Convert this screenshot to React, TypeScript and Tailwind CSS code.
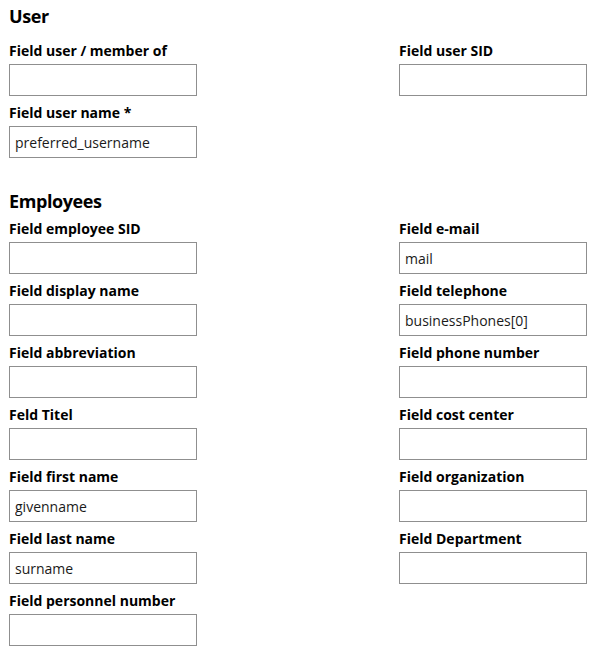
import React from "react";

type Field = { label: string; value?: string };

const userRows: [Field, Field | null][] = [
  [{ label: "Field user / member of" }, { label: "Field user SID" }],
  [{ label: "Field user name *", value: "preferred_username" }, null],
];

const employeeRows: [Field, Field | null][] = [
  [{ label: "Field employee SID" }, { label: "Field e-mail", value: "mail" }],
  [{ label: "Field display name" }, { label: "Field telephone", value: "businessPhones[0]" }],
  [{ label: "Field abbreviation" }, { label: "Field phone number" }],
  [{ label: "Feld Titel" }, { label: "Field cost center" }],
  [{ label: "Field first name", value: "givenname" }, { label: "Field organization" }],
  [{ label: "Field last name", value: "surname" }, { label: "Field Department" }],
  [{ label: "Field personnel number" }, null],
];

function FieldBox({ field }: { field: Field | null }) {
  if (!field) return <div />;
  return (
    <div className="flex flex-col">
      <label className="text-[14px] leading-[16px] font-bold text-black">{field.label}</label>
      <input
        defaultValue={field.value ?? ""}
        className="mt-[5px] w-[188px] h-[32px] border border-[#8f8f8f] bg-white px-[5px] text-[14px] text-[#1a1a1a] outline-none"
      />
    </div>
  );
}

function Section({ title, rows, className, gridClass }: { title: string; rows: [Field, Field | null][]; className?: string; gridClass: string }) {
  return (
    <section className={className}>
      <h2 className="text-[18px] leading-[24px] font-bold tracking-[-0.4px] text-black">{title}</h2>
      <div className={"grid grid-cols-[390px_1fr] gap-y-[9px] " + gridClass}>
        {rows.map((r, i) => (
          <React.Fragment key={i}>
            <FieldBox field={r[0]} />
            <FieldBox field={r[1]} />
          </React.Fragment>
        ))}
      </div>
    </section>
  );
}

export default function App() {
  return (
    <div className="w-[601px] min-h-[655px] bg-white pl-[9px] pt-[4px]" style={{ fontFamily: '"Open Sans", "Noto Sans", sans-serif' }}>
      <Section title="User" rows={userRows} gridClass="mt-[15px]" />
      <Section title="Employees" rows={employeeRows} className="mt-[31px]" gridClass="mt-[8px]" />
    </div>
  );
}
